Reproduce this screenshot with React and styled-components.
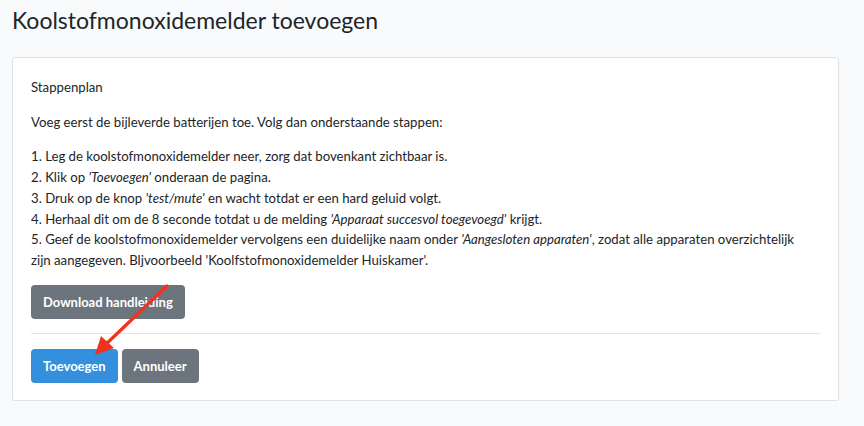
import React from 'react';
import styled, { createGlobalStyle } from 'styled-components';

const GlobalStyle = createGlobalStyle`
  body {
    margin: 0;
    background: #f8fafc;
    font-family: 'Lato', 'Noto Sans', sans-serif;
    color: #212529;
  }
`;

const Page = styled.div`
  padding: 0 25px 0 12px;
`;

const Title = styled.h1`
  margin: 0;
  padding: 6px 0 0;
  height: 50px;
  box-sizing: border-box;
  font-size: 23px;
  font-weight: 400;
  color: #212529;
`;

const Card = styled.div`
  position: relative;
  margin-top: 7px;
  background: #fff;
  border: 1px solid #dfe1e4;
  border-radius: 3px;
  box-shadow: 0 1px 1px rgba(0, 0, 0, 0.04);
  padding: 19px 18px 17px 18px;
`;

const Text = styled.div`
  font-size: 13.2px;
  line-height: 20.7px;
  color: #212529;
`;

const Heading = styled(Text)`
  margin: 0 0 14px;
`;

const Paragraph = styled(Text)`
  margin: 0 0 14px;
`;

const Em = styled.em`
  font-style: italic;
`;

const Button = styled.button`
  font-family: inherit;
  font-size: 13px;
  font-weight: 700;
  color: #fff;
  border: none;
  border-radius: 4px;
  height: 34px;
  padding: 0 12px;
  background: ${(p) => (p.$primary ? '#3490dc' : '#6c757d')};
  cursor: pointer;
`;

const DownloadRow = styled.div`
  margin-top: 14px;
`;

const Divider = styled.hr`
  margin: 14px 0 15px;
  border: none;
  border-top: 1px solid #e2e4e6;
`;

const Actions = styled.div`
  display: flex;
  gap: 4px;
`;

const Arrow = styled.svg`
  position: absolute;
  left: 60px;
  top: 222px;
  overflow: visible;
  pointer-events: none;
`;

export default function App() {
  return (
    <>
      <GlobalStyle />
      <Page>
        <Title>Koolstofmonoxidemelder toevoegen</Title>
        <Card>
          <Heading>Stappenplan</Heading>
          <Paragraph>Voeg eerst de bijleverde batterijen toe. Volg dan onderstaande stappen:</Paragraph>
          <Text>
            1. Leg de koolstofmonoxidemelder neer, zorg dat bovenkant zichtbaar is.<br />
            2. Klik op <Em>'Toevoegen'</Em> onderaan de pagina.<br />
            3. Druk op de knop <Em>'test/mute'</Em> en wacht totdat er een hard geluid volgt.<br />
            4. Herhaal dit om de 8 seconde totdat u de melding <Em>'Apparaat succesvol toegevoegd'</Em> krijgt.<br />
            5. Geef de koolstofmonoxidemelder vervolgens een duidelijke naam onder <Em>'Aangesloten apparaten'</Em>, zodat alle apparaten overzichtelijk<br />
            zijn aangegeven. Bljvoorbeeld 'Koolfstofmonoxidemelder Huiskamer'.
          </Text>
          <DownloadRow>
            <Button>Download handleiding</Button>
          </DownloadRow>
          <Divider />
          <Actions>
            <Button $primary>Toevoegen</Button>
            <Button>Annuleer</Button>
          </Actions>
          <Arrow width="100" height="100" viewBox="0 0 100 100">
            <line x1="94" y1="6" x2="30" y2="67" stroke="#f2321c" strokeWidth="3.2" strokeLinecap="round" />
            <polygon points="22,75 28,56 41,68" fill="#f2321c" />
          </Arrow>
        </Card>
      </Page>
    </>
  );
}
